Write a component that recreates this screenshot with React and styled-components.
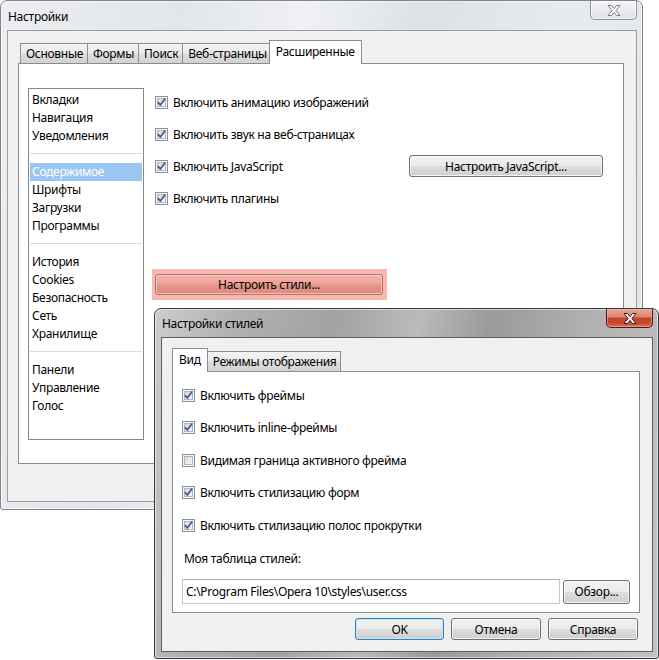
import React from 'react';
import styled, { createGlobalStyle, css } from 'styled-components';

const GlobalStyle = createGlobalStyle`
  html, body {
    margin: 0;
    padding: 0;
    background: #fff;
  }
  body {
    font-family: "Noto Sans", "Segoe UI", sans-serif;
    font-size: 12px;
    letter-spacing: -0.3px;
    color: #000;
  }
  * { box-sizing: border-box; }
`;

const menuGroups = [
  ['Вкладки', 'Навигация', 'Уведомления'],
  ['Содержимое', 'Шрифты', 'Загрузки', 'Программы'],
  ['История', 'Cookies', 'Безопасность', 'Сеть', 'Хранилище'],
  ['Панели', 'Управление', 'Голос'],
];

const mainOptions = [
  { label: 'Включить анимацию изображений', checked: true },
  { label: 'Включить звук на веб-страницах', checked: true },
  { label: 'Включить JavaScript', checked: true, action: 'Настроить JavaScript...' },
  { label: 'Включить плагины', checked: true },
];

const styleOptions = [
  { label: 'Включить фреймы', checked: true },
  { label: 'Включить inline-фреймы', checked: true },
  { label: 'Видимая граница активного фрейма', checked: false },
  { label: 'Включить стилизацию форм', checked: true },
  { label: 'Включить стилизацию полос прокрутки', checked: true },
];

const inactiveGlass = css`
  background: linear-gradient(100deg, #eceef1 0%, #e2e5e9 25%, #eff1f4 42%, #dde1e6 58%, #e7eaee 78%, #e3e6ea 100%);
  border-color: #80848a;
`;

const activeGlass = css`
  background: linear-gradient(100deg, #cdcdcd 0%, #b1b1b1 14%, #a2a2a2 32%, #bababa 47%, #9a9a9a 60%, #b2b2b2 78%, #c3c3c3 100%);
  border-color: #35383c;
`;

const Desktop = styled.div`
  position: relative;
  width: 659px;
  height: 660px;
  overflow: hidden;
  background: #fff;
`;

const Window = styled.div`
  position: absolute;
  left: ${(p) => p.$x}px;
  top: ${(p) => p.$y}px;
  width: ${(p) => p.$w}px;
  height: ${(p) => p.$h}px;
  display: flex;
  flex-direction: column;
  border: 1px solid;
  border-radius: 7px 7px 3px 3px;
  box-shadow: inset 0 0 0 1px rgba(255, 255, 255, 0.55);
  ${(p) => (p.$active ? activeGlass : inactiveGlass)}
`;

const TitleBar = styled.div`
  height: ${(p) => p.$h}px;
  flex: none;
  display: flex;
  align-items: flex-start;
  padding: 0 5px 0 7px;
`;

const Title = styled.span`
  align-self: center;
  padding-top: 1px;
  color: #000;
`;

const CloseButton = styled.div`
  margin-left: auto;
  width: 47px;
  height: 19px;
  display: flex;
  align-items: center;
  justify-content: center;
  border: 1px solid;
  border-top: none;
  border-radius: 0 0 5px 5px;
  ${(p) =>
    p.$active
      ? css`
          border-color: #3f1f19;
          background: linear-gradient(#e9a897 0%, #db8670 42%, #c2432b 52%, #c8472d 78%, #de7558 100%);
          box-shadow: inset 0 0 0 1px rgba(255, 200, 180, 0.45);
        `
      : css`
          border-color: #8d9196;
          background: linear-gradient(#f4f5f7 0%, #e9ebee 50%, #dfe2e6 100%);
          box-shadow: inset 0 0 0 1px rgba(255, 255, 255, 0.7);
        `}
`;

const Client = styled.div`
  flex: 1;
  display: flex;
  flex-direction: column;
  margin: 0 5px 7px 6px;
  padding: ${(p) => p.$pt}px 12px ${(p) => p.$pb}px 10px;
  background: #f0f0f0;
  border: 1px solid ${(p) => (p.$active ? '#5b5f64' : '#9a9ea3')};
`;

const TabRow = styled.div`
  display: flex;
  align-items: flex-end;
  height: 23px;
  padding-left: 2px;
  flex: none;
`;

const Tab = styled.div`
  position: relative;
  height: 20px;
  padding: 0 4px 0 5px;
  display: flex;
  align-items: center;
  white-space: nowrap;
  border: 1px solid #898c95;
  border-bottom: none;
  margin-right: -1px;
  background: linear-gradient(#f3f3f3 0%, #ebebeb 45%, #dcdcdc 55%, #d2d2d2 100%);
  ${(p) =>
    p.$active &&
    css`
      z-index: 1;
      height: 24px;
      margin: 0 -1px -1px -2px;
      padding: 0 6px 2px 6px;
      background: #fff;
    `}
`;

const Panel = styled.div`
  flex: 1;
  display: flex;
  flex-direction: ${(p) => (p.$column ? 'column' : 'row')};
  background: #fff;
  border: 1px solid #898c95;
  padding: ${(p) => p.$pad};
`;

const ListBox = styled.div`
  width: 116px;
  height: 352px;
  flex: none;
  border: 1px solid #828790;
  padding: 2px 1px;
`;

const ListItem = styled.div`
  height: 18px;
  line-height: 18px;
  padding-left: 2px;
  white-space: nowrap;
  ${(p) =>
    p.$selected &&
    css`
      background: #99c6f2;
      color: #fff;
    `}
`;

const ListSeparator = styled.div`
  height: 1px;
  margin: 8px 0 9px;
  background: #dcdcdc;
`;

const OptionsColumn = styled.div`
  flex: 1;
  display: flex;
  flex-direction: column;
  align-items: stretch;
  gap: ${(p) => p.$gap}px;
  margin-left: ${(p) => p.$ml}px;
  padding: ${(p) => p.$pad};
`;

const OptionRow = styled.div`
  height: 22px;
  display: flex;
  align-items: center;
  gap: 5px;
  white-space: nowrap;
`;

const PushButton = styled.div`
  height: ${(p) => p.$h || 22}px;
  width: ${(p) => p.$w}px;
  flex: none;
  display: flex;
  align-items: center;
  justify-content: center;
  white-space: nowrap;
  border: 1px solid #707070;
  border-radius: 3px;
  background: linear-gradient(#f2f2f2 0%, #ebebeb 48%, #dddddd 52%, #cfcfcf 100%);
  box-shadow: inset 0 0 0 1px rgba(255, 255, 255, 0.75);
  ${(p) =>
    p.$push &&
    css`
      margin-left: auto;
    `}
  ${(p) =>
    p.$variant === 'default' &&
    css`
      border-color: #3c7fb1;
      box-shadow: inset 0 0 0 1px #b8e6fa;
    `}
  ${(p) =>
    p.$variant === 'marked' &&
    css`
      border-color: #b0756c;
      background: linear-gradient(#f4b2a8 0%, #eea397 48%, #e5958a 52%, #df897d 100%);
      box-shadow: inset 0 0 0 1px rgba(255, 215, 205, 0.7);
    `}
`;

const MarkedArea = styled.div`
  align-self: flex-start;
  margin: 50px 0 0 -3px;
  padding: 5px 4px 5px 3px;
  background: #f5b9b1;
`;

const FieldLabel = styled.div`
  height: 16px;
  line-height: 16px;
  margin-top: 15px;
  padding-left: 2px;
`;

const FieldRow = styled.div`
  display: flex;
  align-items: center;
  gap: 3px;
  margin-top: 12px;
`;

const TextField = styled.div`
  flex: 1;
  height: 25px;
  display: flex;
  align-items: center;
  padding-left: 3px;
  background: #fff;
  border: 1px solid #c5c8ce;
  border-top-color: #abadb3;
  white-space: nowrap;
`;

const ButtonRow = styled.div`
  display: flex;
  justify-content: flex-end;
  gap: 7px;
  margin-top: 5px;
  padding-right: 2px;
`;

function CloseGlyph({ active }) {
  return (
    <svg width="14" height="11" viewBox="0 0 14 11">
      <path
        d="M1 0.5 H4.5 L7 3.6 L9.5 0.5 H13 L8.9 5.5 L13 10.5 H9.5 L7 7.4 L4.5 10.5 H1 L5.1 5.5 Z"
        fill="#fff"
        stroke={active ? '#3a1711' : '#7a7e84'}
        strokeWidth="1"
        strokeLinejoin="round"
      />
    </svg>
  );
}

function Checkbox({ checked }) {
  return (
    <svg width="13" height="13" viewBox="0 0 13 13" style={{ flex: 'none' }}>
      <defs>
        <linearGradient id="cbFill" x1="0" y1="0" x2="1" y2="1">
          <stop offset="0" stopColor="#d3d6db" />
          <stop offset="1" stopColor="#fafafa" />
        </linearGradient>
      </defs>
      <rect x="0.5" y="0.5" width="12" height="12" fill="#f6f6f6" stroke="#8e8f8f" />
      <rect x="2.5" y="2.5" width="8" height="8" fill="url(#cbFill)" stroke="#b3b7bd" />
      {checked && (
        <path
          d="M3.3 6.6 L5.3 9 L9.8 3"
          fill="none"
          stroke="#44589a"
          strokeWidth="1.8"
          strokeLinecap="round"
          strokeLinejoin="round"
        />
      )}
    </svg>
  );
}

function Option({ label, checked, children }) {
  return (
    <OptionRow>
      <Checkbox checked={checked} />
      <span>{label}</span>
      {children}
    </OptionRow>
  );
}

function SettingsWindow() {
  const tabs = ['Основные', 'Формы', 'Поиск', 'Веб-страницы', 'Расширенные'];
  return (
    <Window $x={0} $y={0} $w={643} $h={510}>
      <TitleBar $h={29}>
        <Title>Настройки</Title>
        <CloseButton>
          <CloseGlyph />
        </CloseButton>
      </TitleBar>
      <Client $pt={9} $pb={37}>
        <TabRow>
          {tabs.map((t) => (
            <Tab key={t} $active={t === 'Расширенные'}>
              {t}
            </Tab>
          ))}
        </TabRow>
        <Panel $pad="24px 0 0 9px">
          <ListBox>
            {menuGroups.map((group, gi) => (
              <React.Fragment key={gi}>
                {gi > 0 && <ListSeparator />}
                {group.map((item) => (
                  <ListItem key={item} $selected={item === 'Содержимое'}>
                    {item}
                  </ListItem>
                ))}
              </React.Fragment>
            ))}
          </ListBox>
          <OptionsColumn $gap={10} $ml={11} $pad="3px 20px 0 0">
            {mainOptions.map((o) => (
              <Option key={o.label} label={o.label} checked={o.checked}>
                {o.action && (
                  <PushButton $w={194} $push>
                    {o.action}
                  </PushButton>
                )}
              </Option>
            ))}
            <MarkedArea>
              <PushButton $w={228} $h={21} $variant="marked">
                Настроить стили...
              </PushButton>
            </MarkedArea>
          </OptionsColumn>
        </Panel>
      </Client>
    </Window>
  );
}

function StylesDialog() {
  return (
    <Window $x={154} $y={308} $w={505} $h={351} $active>
      <TitleBar $h={28}>
        <Title>Настройки стилей</Title>
        <CloseButton $active>
          <CloseGlyph active />
        </CloseButton>
      </TitleBar>
      <Client $pt={10} $pb={11} $active>
        <TabRow>
          <Tab $active>Вид</Tab>
          <Tab>Режимы отображения</Tab>
        </TabRow>
        <Panel $column $pad="12px 9px 8px 9px">
          <OptionsColumn $gap={10.5} $ml={0} $pad="0">
            {styleOptions.map((o) => (
              <Option key={o.label} label={o.label} checked={o.checked} />
            ))}
          </OptionsColumn>
          <FieldLabel>Моя таблица стилей:</FieldLabel>
          <FieldRow>
            <TextField>{'C:\\Program Files\\Opera 10\\styles\\user.css'}</TextField>
            <PushButton $w={67} $h={24}>
              Обзор...
            </PushButton>
          </FieldRow>
        </Panel>
        <ButtonRow>
          <PushButton $w={89} $variant="default">
            OK
          </PushButton>
          <PushButton $w={90}>Отмена</PushButton>
          <PushButton $w={90}>Справка</PushButton>
        </ButtonRow>
      </Client>
    </Window>
  );
}

export default function App() {
  return (
    <Desktop>
      <GlobalStyle />
      <SettingsWindow />
      <StylesDialog />
    </Desktop>
  );
}
